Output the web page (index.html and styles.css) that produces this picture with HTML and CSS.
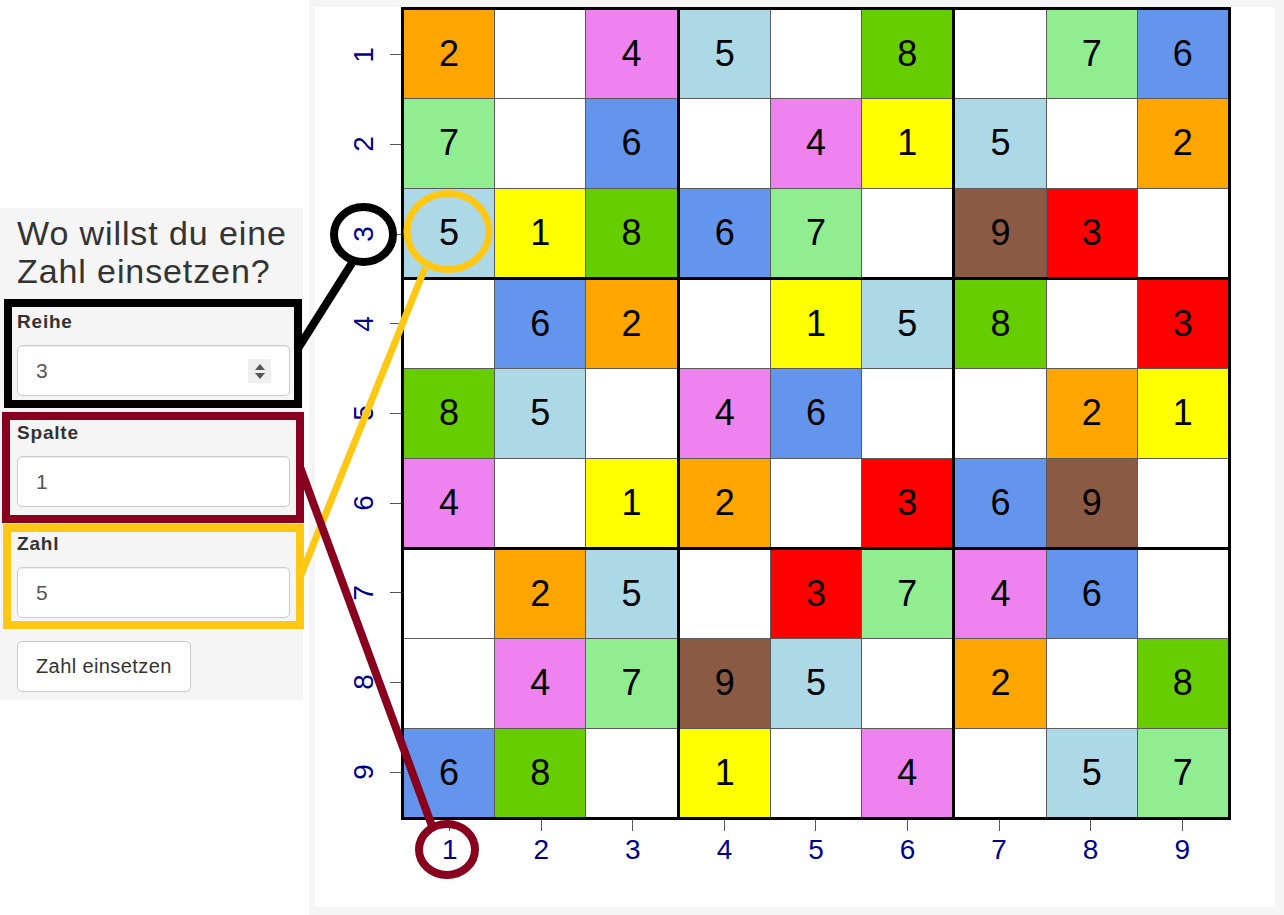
FILE: index.html
```html
<!DOCTYPE html>
<html lang="de">
  <head>
    <meta charset="UTF-8" />
    <title>Sudoku</title>
    <link rel="stylesheet" href="styles.css">
  </head>
  <body>
    <div class="page">
      <!-- Eingabe -->
      <div class="sidebar">
        <h3 class="title">Wo willst du eine Zahl einsetzen?</h3>
        <div class="group">
          <label for="reihe">Reihe</label>
          <div class="field">
            <input type="text" id="reihe" value="3" />
            <span class="spinner"><i class="up"></i><i class="down"></i></span>
          </div>
        </div>
        <div class="group">
          <label for="spalte">Spalte</label>
          <div class="field"><input type="text" id="spalte" value="1" /></div>
        </div>
        <div class="group">
          <label for="zahl">Zahl</label>
          <div class="field"><input type="text" id="zahl" value="5" /></div>
        </div>
        <button class="btn" type="button">Zahl einsetzen</button>
      </div>

      <!-- Spielfeld -->
      <div class="main">
        <div class="plot">
          <div class="y-axis">
            <div class="y-row"><span class="y-label">1</span><span class="y-tick"></span></div>
            <div class="y-row"><span class="y-label">2</span><span class="y-tick"></span></div>
            <div class="y-row"><span class="y-label">3</span><span class="y-tick"></span></div>
            <div class="y-row"><span class="y-label">4</span><span class="y-tick"></span></div>
            <div class="y-row"><span class="y-label">5</span><span class="y-tick"></span></div>
            <div class="y-row"><span class="y-label">6</span><span class="y-tick"></span></div>
            <div class="y-row"><span class="y-label">7</span><span class="y-tick"></span></div>
            <div class="y-row"><span class="y-label">8</span><span class="y-tick"></span></div>
            <div class="y-row"><span class="y-label">9</span><span class="y-tick"></span></div>
          </div>

          <div class="board">
            <div class="box">
              <div class="cell n2">2</div><div class="cell"></div><div class="cell n4">4</div>
              <div class="cell n7">7</div><div class="cell"></div><div class="cell n6">6</div>
              <div class="cell n5">5</div><div class="cell n1">1</div><div class="cell n8">8</div>
            </div>
            <div class="box">
              <div class="cell n5">5</div><div class="cell"></div><div class="cell n8">8</div>
              <div class="cell"></div><div class="cell n4">4</div><div class="cell n1">1</div>
              <div class="cell n6">6</div><div class="cell n7">7</div><div class="cell"></div>
            </div>
            <div class="box">
              <div class="cell"></div><div class="cell n7">7</div><div class="cell n6">6</div>
              <div class="cell n5">5</div><div class="cell"></div><div class="cell n2">2</div>
              <div class="cell n9">9</div><div class="cell n3">3</div><div class="cell"></div>
            </div>
            <div class="box">
              <div class="cell"></div><div class="cell n6">6</div><div class="cell n2">2</div>
              <div class="cell n8">8</div><div class="cell n5">5</div><div class="cell"></div>
              <div class="cell n4">4</div><div class="cell"></div><div class="cell n1">1</div>
            </div>
            <div class="box">
              <div class="cell"></div><div class="cell n1">1</div><div class="cell n5">5</div>
              <div class="cell n4">4</div><div class="cell n6">6</div><div class="cell"></div>
              <div class="cell n2">2</div><div class="cell"></div><div class="cell n3">3</div>
            </div>
            <div class="box">
              <div class="cell n8">8</div><div class="cell"></div><div class="cell n3">3</div>
              <div class="cell"></div><div class="cell n2">2</div><div class="cell n1">1</div>
              <div class="cell n6">6</div><div class="cell n9">9</div><div class="cell"></div>
            </div>
            <div class="box">
              <div class="cell"></div><div class="cell n2">2</div><div class="cell n5">5</div>
              <div class="cell"></div><div class="cell n4">4</div><div class="cell n7">7</div>
              <div class="cell n6">6</div><div class="cell n8">8</div><div class="cell"></div>
            </div>
            <div class="box">
              <div class="cell"></div><div class="cell n3">3</div><div class="cell n7">7</div>
              <div class="cell n9">9</div><div class="cell n5">5</div><div class="cell"></div>
              <div class="cell n1">1</div><div class="cell"></div><div class="cell n4">4</div>
            </div>
            <div class="box">
              <div class="cell n4">4</div><div class="cell n6">6</div><div class="cell"></div>
              <div class="cell n2">2</div><div class="cell"></div><div class="cell n8">8</div>
              <div class="cell"></div><div class="cell n5">5</div><div class="cell n7">7</div>
            </div>
          </div>

          <div class="x-axis">
            <div class="x-col"><span class="x-tick"></span><span class="x-label">1</span></div>
            <div class="x-col"><span class="x-tick"></span><span class="x-label">2</span></div>
            <div class="x-col"><span class="x-tick"></span><span class="x-label">3</span></div>
            <div class="x-col"><span class="x-tick"></span><span class="x-label">4</span></div>
            <div class="x-col"><span class="x-tick"></span><span class="x-label">5</span></div>
            <div class="x-col"><span class="x-tick"></span><span class="x-label">6</span></div>
            <div class="x-col"><span class="x-tick"></span><span class="x-label">7</span></div>
            <div class="x-col"><span class="x-tick"></span><span class="x-label">8</span></div>
            <div class="x-col"><span class="x-tick"></span><span class="x-label">9</span></div>
          </div>
        </div>
      </div>
    </div>

    <!-- Markierungen über Eingabe und Spielfeld -->
    <svg class="marks" width="1284" height="915" viewBox="0 0 1284 915">
      <g fill="none" stroke-width="8">
        <rect x="8" y="303" width="290" height="101" stroke="#000" />
        <ellipse cx="363.5" cy="234.5" rx="29.5" ry="27.5" stroke="#000" />
        <line x1="352" y1="263" x2="297" y2="350" stroke="#000" />

        <rect x="7" y="528" width="293" height="97" stroke="#ffc815" />
        <ellipse cx="448" cy="231.5" rx="41" ry="38" stroke="#ffc815" stroke-width="7" />
        <line x1="425" y1="268" x2="299" y2="580" stroke="#ffc815" stroke-width="7" />

        <rect x="6" y="416" width="294" height="103" stroke="#88001e" />
        <ellipse cx="447" cy="849.5" rx="28" ry="25.5" stroke="#88001e" />
        <line x1="300" y1="467" x2="432" y2="826" stroke="#88001e" />
      </g>
    </svg>
  </body>
</html>
```

FILE: styles.css
```css
body {
  margin: 0;
  position: relative;
  font-family: "Liberation Sans", Arial, sans-serif;
  color: #333;
  background-color: #fff;
}

.page {
  display: flex;
  gap: 6px;
  height: 915px;
  overflow: hidden;
}

/* Eingabe links */

.sidebar {
  width: 303px;
  flex: none;
  box-sizing: border-box;
  align-self: flex-start;
  margin-top: 208px;
  padding: 6px 13px 8px 17px;
  background-color: #f5f5f5;
}

.title {
  margin: 0 0 21px 0;
  font-size: 34px;
  font-weight: normal;
  line-height: 38px;
  letter-spacing: 0.9px;
}

.group {
  margin-bottom: 26px;
}

.group:last-of-type {
  margin-bottom: 23px;
}

.group label {
  display: block;
  margin-bottom: 12px;
  font-size: 19px;
  font-weight: bold;
  line-height: 22px;
  letter-spacing: 0.8px;
}

.field {
  position: relative;
}

.field input {
  display: block;
  width: 100%;
  height: 51px;
  box-sizing: border-box;
  padding: 0 18px;
  border: 1px solid #ccc;
  border-radius: 5px;
  background-color: #fff;
  font-family: inherit;
  font-size: 21px;
  color: #555;
  box-shadow: inset 0 1px 1px rgba(0, 0, 0, 0.075);
}

.spinner {
  position: absolute;
  right: 19px;
  top: 14px;
  width: 23px;
  height: 24px;
  background-color: #efefef;
  display: flex;
  flex-direction: column;
  align-items: center;
  justify-content: center;
  gap: 3px;
}

.spinner i {
  width: 0;
  height: 0;
  border-left: 5px solid transparent;
  border-right: 5px solid transparent;
}

.spinner .up {
  border-bottom: 6px solid #555;
}

.spinner .down {
  border-top: 6px solid #555;
}

.btn {
  display: block;
  width: 174px;
  height: 51px;
  padding: 0 18px;
  border: 1px solid #ccc;
  border-radius: 5px;
  background-color: #fff;
  font-family: inherit;
  font-size: 20px;
  color: #333;
  letter-spacing: 0.4px;
  text-align: left;
}

/* Spielfeld rechts */

.main {
  flex: 1;
  background-color: #f5f5f5;
  padding: 7px 9px 8px 6px;
}

.plot {
  width: 960px;
  height: 900px;
  background-color: #fff;
  display: grid;
  grid-template-columns: 86px 830px;
  grid-template-rows: 813px auto;
}

.board {
  box-sizing: border-box;
  border: 3px solid #000;
  background-color: #000;
  display: grid;
  grid-template-columns: repeat(3, 1fr);
  grid-template-rows: repeat(3, 1fr);
  gap: 3px;
}

.box {
  display: grid;
  grid-template-columns: repeat(3, 1fr);
  grid-template-rows: repeat(3, 1fr);
  gap: 1px;
  background-color: #5a5a5a;
}

.cell {
  background-color: #fff;
  display: flex;
  align-items: center;
  justify-content: center;
  font-size: 36px;
  color: #000;
}

.n1 { background-color: #ffff00; }
.n2 { background-color: #ffa500; }
.n3 { background-color: #ff0000; }
.n4 { background-color: #ee82ee; }
.n5 { background-color: #add8e6; }
.n6 { background-color: #6495ed; }
.n7 { background-color: #90ee90; }
.n8 { background-color: #66cd00; }
.n9 { background-color: #8b5a43; }

.y-axis {
  display: grid;
  grid-template-rows: repeat(9, 1fr);
  padding: 3px 0;
}

.y-row {
  display: flex;
  align-items: center;
  justify-content: flex-end;
}

.y-label {
  display: inline-block;
  margin-right: 18px;
  font-size: 28px;
  line-height: 32px;
  color: #00008b;
  transform: rotate(-90deg);
}

.y-tick {
  width: 11px;
  height: 1px;
  background-color: #555;
}

.x-axis {
  grid-column: 2;
  display: grid;
  grid-template-columns: repeat(9, 1fr);
  align-items: start;
  padding: 0 3px;
}

.x-col {
  display: flex;
  flex-direction: column;
  align-items: center;
}

.x-tick {
  width: 1px;
  height: 11px;
  background-color: #555;
}

.x-label {
  margin-top: 3px;
  font-size: 28px;
  line-height: 32px;
  color: #00008b;
}

.marks {
  position: absolute;
  top: 0;
  left: 0;
  pointer-events: none;
}
```
